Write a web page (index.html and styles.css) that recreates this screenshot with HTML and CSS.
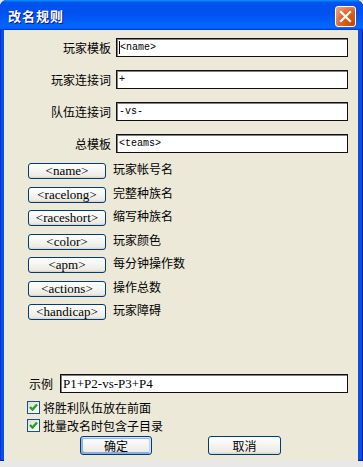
FILE: index.html
```html
<!DOCTYPE html>
<html lang="zh-CN">
<head>
<meta charset="UTF-8">
<title>改名规则</title>
<link rel="stylesheet" href="styles.css">
</head>
<body>
	<div class="window">
		<div class="titlebar">
			<span class="title">改名规则</span>
			<span class="close">
				<svg width="13" height="13" viewBox="0 0 13 13">
					<path d="M2 2 L11 11 M11 2 L2 11" stroke="#fff" stroke-width="2.2" stroke-linecap="square"/>
				</svg>
			</span>
		</div>

		<div class="client">
			<div class="fields">
				<div class="field"><span class="label">玩家模板</span><div class="text"><span class="caret"></span>&lt;name&gt;</div></div>
				<div class="field"><span class="label">玩家连接词</span><div class="text">+</div></div>
				<div class="field"><span class="label">队伍连接词</span><div class="text">-vs-</div></div>
				<div class="field"><span class="label">总模板</span><div class="text">&lt;teams&gt;</div></div>
			</div>

			<div class="tags">
				<div class="tag"><span class="btn tag-btn">&lt;name&gt;</span><span class="tag-label">玩家帐号名</span></div>
				<div class="tag"><span class="btn tag-btn">&lt;racelong&gt;</span><span class="tag-label">完整种族名</span></div>
				<div class="tag"><span class="btn tag-btn">&lt;raceshort&gt;</span><span class="tag-label">缩写种族名</span></div>
				<div class="tag"><span class="btn tag-btn">&lt;color&gt;</span><span class="tag-label">玩家颜色</span></div>
				<div class="tag"><span class="btn tag-btn">&lt;apm&gt;</span><span class="tag-label">每分钟操作数</span></div>
				<div class="tag"><span class="btn tag-btn">&lt;actions&gt;</span><span class="tag-label">操作总数</span></div>
				<div class="tag"><span class="btn tag-btn">&lt;handicap&gt;</span><span class="tag-label">玩家障碍</span></div>
			</div>

			<div class="example">
				<span class="label">示例</span>
				<div class="text serif">P1+P2-vs-P3+P4</div>
			</div>

			<div class="check first">
				<span class="box"><svg width="11" height="11" viewBox="0 0 11 11"><path d="M2 5 L4.5 7.5 L9 2.5" fill="none" stroke="#21a121" stroke-width="2.4"/></svg></span>
				<span>将胜利队伍放在前面</span>
			</div>
			<div class="check">
				<span class="box"><svg width="11" height="11" viewBox="0 0 11 11"><path d="M2 5 L4.5 7.5 L9 2.5" fill="none" stroke="#21a121" stroke-width="2.4"/></svg></span>
				<span>批量改名时包含子目录</span>
			</div>

			<div class="actions">
				<span class="btn action default">确定</span>
				<span class="btn action cancel">取消</span>
			</div>
		</div>
	</div>
</body>
</html>
```

FILE: styles.css
```css
html, body {
    margin: 0;
    padding: 0;
}

body {
    background: #e8e8e8;
    width: 363px;
    height: 467px;
    overflow: hidden;
    font-family: "Noto Sans CJK SC", "Liberation Sans", sans-serif;
    font-size: 12px;
    color: #000;
}

.window {
    width: 363px;
    background: #0a4ee4;
    border-radius: 7px 7px 0 0;
    box-shadow: inset 1px 0 #0831d9, inset -1px 0 #001ea0, inset 0 -1px #001ea0;
}

.titlebar {
    height: 30px;
    display: flex;
    align-items: center;
    justify-content: space-between;
    padding: 0 7px 0 8px;
    border-radius: 7px 7px 0 0;
    background: linear-gradient(180deg, #0997ff, #0053ee 8%, #0050ee 40%, #0066ff 88%, #0066ff 93%, #005bff 95%, #003dd7 96%, #003dd7);
}

.title {
    color: #fff;
    font-weight: bold;
    font-size: 13px;
    letter-spacing: 1px;
    text-shadow: 1px 1px #0f1089;
    line-height: 14px;
    margin-top: 2px;
}

.close {
    width: 19px;
    height: 19px;
    margin-top: 2px;
    display: flex;
    align-items: center;
    justify-content: center;
    border: 1px solid #fff;
    border-radius: 3px;
    background: radial-gradient(circle at 90% 90%, #cc4600 0%, #dc6527 55%, #e28b5e 75%, #e9a482 100%);
}

.client {
    margin: 0 5px 0 4px;
    height: 431px;
    box-sizing: border-box;
    background: #ece9d8;
    padding-top: 8px;
    display: flex;
    flex-direction: column;
}

.fields {
    display: flex;
    flex-direction: column;
    gap: 13px;
}

.field {
    display: grid;
    grid-template-columns: 107px 232px;
    column-gap: 5px;
    align-items: center;
}

.label {
    text-align: right;
    line-height: 14px;
}

.text {
    height: 19px;
    box-sizing: border-box;
    border: 1px solid #111;
    box-shadow: inset 1px 1px #7f7f7f;
    background: #fff;
    font-family: "Liberation Mono", monospace;
    font-size: 10px;
    line-height: 17px;
    padding-left: 2px;
    display: flex;
    align-items: center;
    white-space: pre;
}

.text.serif {
    font-family: "Liberation Serif", serif;
    font-size: 13px;
}

.caret {
    width: 1px;
    height: 13px;
    background: #000;
}

.tags {
    margin-top: 10px;
    padding-left: 24px;
    display: flex;
    flex-direction: column;
    gap: 7.5px;
}

.tag {
    display: flex;
    align-items: flex-start;
    gap: 7px;
}

.btn {
    box-sizing: border-box;
    border: 1px solid #003c74;
    border-radius: 3px;
    background: linear-gradient(180deg, #fff, #ecebe5 86%, #d8d0c4);
    display: flex;
    align-items: center;
    justify-content: center;
}

.tag-btn {
    width: 78px;
    height: 16px;
    font-family: "Liberation Serif", serif;
    font-size: 13px;
    line-height: 14px;
}

.tag-label {
    line-height: 12px;
    font-size: 12px;
}

.example {
    margin-top: 54px;
    padding-left: 25px;
    display: flex;
    align-items: center;
    gap: 7px;
}

.example .text {
    width: 288px;
}

.check {
    margin-top: 5px;
    padding-left: 23px;
    display: flex;
    align-items: center;
    gap: 3px;
    height: 13px;
    line-height: 14px;
}

.check.first {
    margin-top: 8px;
}

.box {
    width: 13px;
    height: 13px;
    box-sizing: border-box;
    border: 1px solid #1c5180;
    background: linear-gradient(135deg, #dcdcd7, #fff);
    display: flex;
    align-items: center;
    justify-content: center;
}

.actions {
    margin-top: 4px;
    padding-left: 76px;
    display: flex;
    gap: 56px;
}

.action {
    width: 72px;
    height: 19px;
    font-size: 12px;
    line-height: 14px;
}

.action.cancel {
    width: 73px;
}

.action.default {
    box-shadow: inset -1px 1px #cee7ff, inset 1px 2px #98b8ea, inset -2px 2px #bcd4f6, inset 1px -1px #89ade4, inset 2px -2px #89ade4;
}
```
